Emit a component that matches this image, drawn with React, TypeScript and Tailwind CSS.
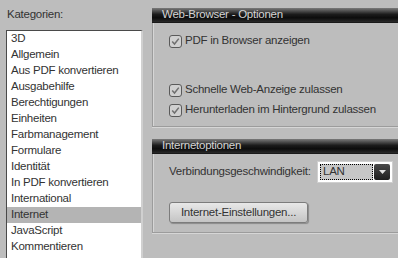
import React from 'react';

const categories = [
  '3D',
  'Allgemein',
  'Aus PDF konvertieren',
  'Ausgabehilfe',
  'Berechtigungen',
  'Einheiten',
  'Farbmanagement',
  'Formulare',
  'Identität',
  'In PDF konvertieren',
  'International',
  'Internet',
  'JavaScript',
  'Kommentieren',
];

const Check = () => (
  <span className="w-[13px] h-[13px] rounded-[3px] border border-[#5a5a5a] bg-[#d0d0d0] flex items-center justify-center shrink-0">
    <svg width="9" height="9" viewBox="0 0 9 9">
      <path d="M1.2 4.6 L3.5 7 L7.8 1.6" fill="none" stroke="#707070" strokeWidth="1.5" />
    </svg>
  </span>
);

const Option = ({ label }: { label: string }) => (
  <div className="flex items-center gap-[3px] h-[16px]">
    <Check />
    <span>{label}</span>
  </div>
);

const Header = ({ title }: { title: string }) => (
  <div className="h-[15px] pl-[10px] flex items-center text-[#d4d4d4] bg-[linear-gradient(#7a7a7a,#1c1c1c_45%,#0c0c0c_70%,#2a2a2a)] border-b border-[#1a1a1a]">
    {title}
  </div>
);

export default function App() {
  return (
    <div
      className="w-[398px] h-[258px] overflow-hidden bg-[#bdbdbd] flex text-[11.5px] tracking-[-0.25px] text-[#333333] leading-none"
      style={{ fontFamily: 'Tahoma, "Liberation Sans", Arial, sans-serif' }}
    >
      <div className="w-[152px] shrink-0 pl-[6px] pt-[9px] flex flex-col">
        <div className="h-[14px] mb-[7px] pl-px">Kategorien:</div>
        <div className="w-[137px] flex-1 bg-white border-t border-l border-[#4a4a4a] border-r-2 border-r-[#d0d0d0]">
          {categories.map((c) => (
            <div
              key={c}
              className={`h-[16px] pl-[4px] flex items-center ${c === 'Internet' ? 'bg-[#b4b4b4]' : ''}`}
            >
              {c}
            </div>
          ))}
        </div>
      </div>

      <div className="flex-1 pt-[8px] flex flex-col">
        <Header title="Web-Browser - Optionen" />
        <div className="h-[104px] border-l border-b border-[#9c9c9c] shadow-[inset_1px_0_0_#d6d6d6,0_1px_0_#d6d6d6] pl-[16px] pt-[10px] flex flex-col">
          <Option label="PDF in Browser anzeigen" />
          <div className="h-[33px]" />
          <Option label="Schnelle Web-Anzeige zulassen" />
          <div className="h-[4px]" />
          <Option label="Herunterladen im Hintergrund zulassen" />
        </div>

        <div className="mt-[12px]">
          <Header title="Internetoptionen" />
        </div>
        <div className="h-[79px] border-l border-b border-[#9c9c9c] shadow-[inset_1px_0_0_#d6d6d6,0_1px_0_#d6d6d6] pl-[16px] pt-[8px] flex flex-col">
          <div className="flex items-center h-[20px]">
            <span className="w-[149px]">Verbindungsgeschwindigkeit:</span>
            <div className="w-[74px] h-[20px] bg-white p-[2px] flex shadow-[0_0_0_1px_#cfcfcf]">
              <div className="flex-1 bg-[#c6c6c6] border border-dotted border-black flex items-center pl-[2px]">
                LAN
              </div>
              <div className="w-[16px] ml-[1px] bg-[linear-gradient(#4a4a4a,#1e1e1e)] rounded-[2px] flex items-center justify-center">
                <svg width="7" height="4" viewBox="0 0 7 4">
                  <path d="M0 0 H7 L3.5 4 Z" fill="#e0e0e0" />
                </svg>
              </div>
            </div>
          </div>
          <div className="h-[20px]" />
          <div className="w-[139px] h-[21px] rounded-[3px] border border-[#7c7c7c] bg-[linear-gradient(#e8e8e8,#c4c4c4)] shadow-[1px_1px_1px_#8a8a8a] flex items-center justify-center">
            Internet-Einstellungen...
          </div>
        </div>
      </div>
    </div>
  );
}
